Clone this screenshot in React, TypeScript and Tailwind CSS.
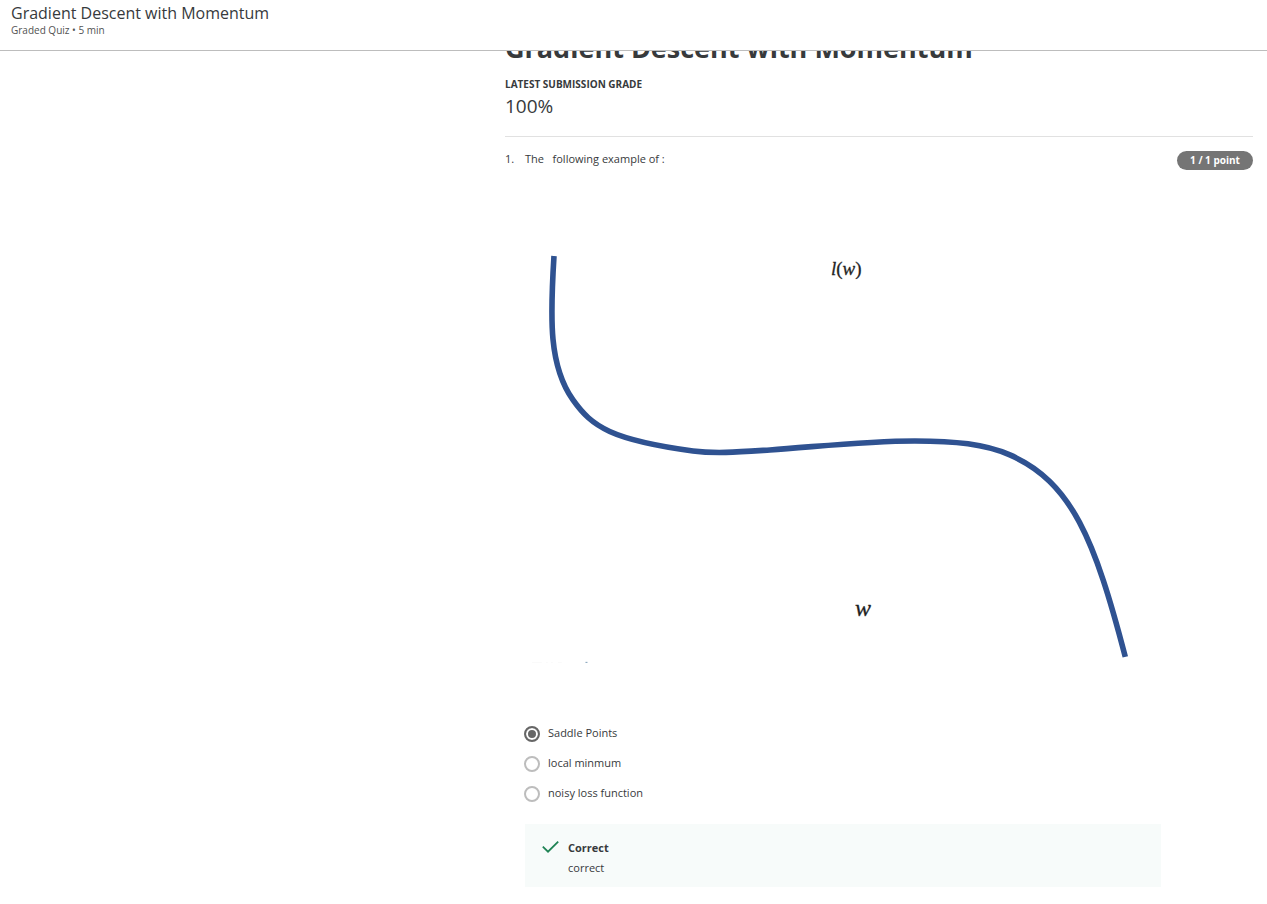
import { useState } from "react";

const options = ["Saddle Points", "local minmum", "noisy loss function"];

function Header() {
  return (
    <header className="relative z-10 h-[51px] border-b border-[#bdbdbd] bg-white px-[11px] pt-[3px]">
      <p className="text-[16px] leading-[20px] text-[#373a3c]">Gradient Descent with Momentum</p>
      <p className="text-[10px] leading-[15px] text-[#525252]">Graded Quiz • 5 min</p>
    </header>
  );
}

function LossCurve() {
  return (
    <svg
      viewBox="525 240 636 424"
      className="block w-full"
      role="img"
      aria-label="Loss curve"
    >
      <path
        d="M554 256C550 320 549 366 573 400C592 427 612 440 693 451C716 454 740 452 770 450C815 447 865 441 915 441C955 441 985 444 1010 455C1072 482 1095 540 1125.5 657"
        fill="none"
        stroke="#2f5291"
        strokeWidth="5.6"
      />
      <g className="font-['Liberation_Serif',serif]" fill="#1f1f1f" stroke="#1f1f1f" strokeWidth="0.3">
        <text x="831" y="275" fontSize="19">
          <tspan fontStyle="italic">l</tspan>(<tspan fontStyle="italic">w</tspan>)
        </text>
        <text x="855" y="616" fontSize="24" fontStyle="italic">w</text>
      </g>
      <path d="M585.5 662.5h2" stroke="#7f9fb8" strokeWidth="1" />
      <path d="M532 662.5h10M546 662.5h2M551 662.5h2M558 662.5h4" stroke="#fafafa" strokeWidth="1" />
    </svg>
  );
}

export default function App() {
  const [selected, setSelected] = useState(options[0]);

  return (
    <div className="min-h-screen bg-white font-['Open_Sans',sans-serif] text-[11px] text-[#373a3c]">
      <Header />
      <main className="pr-[14px] pl-[505px]">
        <h1 className="-mt-[23px] text-[27px] leading-[40px] font-bold">Gradient Descent with Momentum</h1>
        <p className="mt-[9px] text-[10px] leading-[14px] font-bold uppercase">Latest Submission Grade</p>
        <p className="mt-[2px] text-[19px] leading-[26px]">100%</p>
        <section className="mt-[17px] border-t border-[#e1e1e1] pt-[14px]">
          <div className="flex items-start justify-between">
            <p className="flex leading-4">
              <span className="w-5">1.</span>
              <span className="whitespace-pre">The   following example of :</span>
            </p>
            <span className="flex h-[19px] w-[76px] items-center justify-center rounded-full bg-[#757575] text-[10px] font-bold text-white">
              1 / 1 point
            </span>
          </div>
          <div className="ml-5 w-[85%] pt-[70px]">
            <LossCurve />
            <fieldset className="mt-[62px] flex flex-col gap-[14px]">
              {options.map((option) => (
                <label key={option} className="-ml-px flex h-4 cursor-pointer items-start gap-2 leading-[14px]">
                  <input
                    type="radio"
                    name="answer"
                    checked={selected === option}
                    onChange={() => setSelected(option)}
                    className="m-0 size-4 shrink-0 appearance-none rounded-full border-2 border-[#bdbdbd] bg-white checked:border-[#666666] checked:bg-[#666666] checked:bg-clip-padding checked:shadow-[inset_0_0_0_2px_#fff]"
                  />
                  {option}
                </label>
              ))}
            </fieldset>
            <div className="mt-[22px] flex gap-[9px] bg-[#f7fbfa] px-[17px] pt-[14px] pb-[9px] leading-5">
              <svg viewBox="0 0 17 20" className="h-5 w-[17px] shrink-0" aria-hidden="true">
                <path d="M.8 8.7l5.2 5L16.2 3.7" fill="none" stroke="#1f8354" strokeWidth="1.8" />
              </svg>
              <div>
                <p className="font-bold">Correct</p>
                <p>correct</p>
              </div>
            </div>
          </div>
        </section>
      </main>
    </div>
  );
}
